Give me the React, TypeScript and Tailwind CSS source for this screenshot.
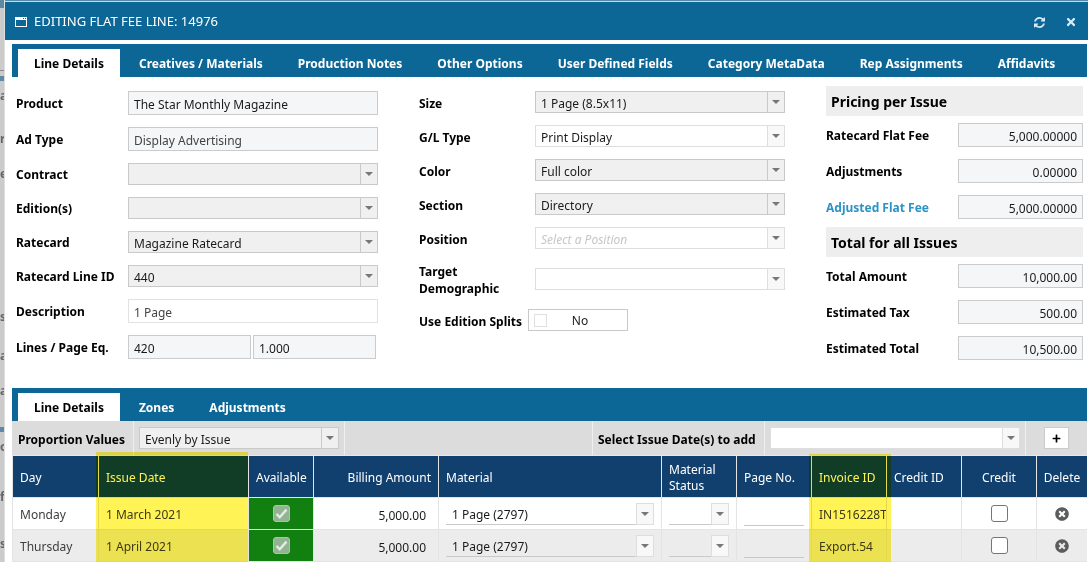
import React from "react";
import clsx from "clsx";
import { FaPlus, FaTimes, FaTimesCircle } from "react-icons/fa";

function WindowIcon() {
  return (
    <svg viewBox="0 0 12 10" className="mt-[2px] h-[10px] w-3" shapeRendering="crispEdges" aria-hidden="true">
      <path fill="currentColor" fillRule="evenodd" d="M0 0h12v10H0zM1 3v6h10V3zM8 1v1h1V1zM10 1v1h1V1z" />
    </svg>
  );
}

function RefreshIcon() {
  return (
    <svg viewBox="0 128 1536 1536" className="h-[11px] w-[11px]" fill="currentColor" aria-hidden="true">
      <path d="M1511 1056q0 5-1 7q-64 268-268 434.5t-478 166.5q-146 0-282.5-55t-243.5-157l-129 129q-19 19-45 19t-45-19t-19-45v-448q0-26 19-45t45-19h448q26 0 45 19t19 45t-19 45l-137 137q71 66 161 102t187 36q134 0 250-65t186-179q11-17 53-117q8-23 30-23h192q13 0 22.5 9.5t9.5 22.5z" />
      <path d="M1536 256v448q0 26-19 45t-45 19h-448q-26 0-45-19t-19-45t19-45l138-138q-148-137-349-137q-134 0-250 65t-186 179q-11 17-53 117q-8 23-30 23h-199q-13 0-22.5-9.5t-9.5-22.5v-7q65-268 270-434.5t480-166.5q146 0 284 55.5t245 156.5l130-129q19-19 45-19t45 19t19 45z" />
    </svg>
  );
}

function Caret() {
  return (
    <svg viewBox="0 0 8 4" className="h-1 w-2" aria-hidden="true">
      <path d="M0 0h8L4 4z" fill="#777777" />
    </svg>
  );
}

type ComboProps = {
  id?: string;
  label?: string;
  value: string;
  look?: "muted" | "plain" | "cell";
  placeholder?: boolean;
  className?: string;
};

function Combo({ id, label, value, look = "muted", placeholder = false, className }: ComboProps) {
  return (
    <div className={clsx("relative h-[22px] min-w-0", className)}>
      <select
        id={id}
        aria-label={label}
        className={clsx(
          "block h-full w-full appearance-none rounded-none pr-5 outline-none",
          look === "muted" && "border border-[#c9c9c9] bg-[#f0f0f0] pl-[5px] pt-[2px]",
          look === "plain" && "border border-[#dedede] bg-white pl-[5px] pt-[2px]",
          look === "cell" && "border-b border-[#c9c9c9] bg-transparent pl-[6px] pt-1",
          placeholder ? "italic text-[#c6c6c6]" : "text-[#1a1a1a]",
        )}
      >
        <option>{value}</option>
      </select>
      <span
        className={clsx(
          "pointer-events-none absolute inset-y-0 right-0 flex w-[18px] items-center justify-center border",
          look === "muted" ? "border-[#c9c9c9] bg-[#f0f0f0]" : "border-[#dedede] bg-[#f8f8f8]",
        )}
      >
        <Caret />
      </span>
    </div>
  );
}

function TextBox({
  id,
  value,
  label,
  tone = "shaded",
  right = false,
}: {
  id?: string;
  value: string;
  label?: string;
  tone?: "shaded" | "soft" | "white";
  right?: boolean;
}) {
  return (
    <input
      id={id}
      aria-label={label}
      type="text"
      defaultValue={value}
      className={clsx(
        "block h-6 w-full min-w-0 rounded-none border px-[5px] pt-[2px] outline-none",
        tone === "white" ? "border-[#e2e2e2] bg-white" : "border-[#c9cbcd] bg-[#f4f6f8]",
        tone === "shaded" ? "text-[#1a1a1a]" : "text-[#444444]",
        right && "text-right",
      )}
    />
  );
}

function Row({
  id,
  label,
  size,
  children,
}: {
  id: string;
  label: string;
  size: "left" | "middle" | "right";
  children: React.ReactNode;
}) {
  return (
    <div className="flex items-center">
      <label
        htmlFor={id}
        className={clsx(
          "shrink-0 font-bold",
          size === "left" && "w-28",
          size === "middle" && "w-[116px] pt-[2px]",
          size === "right" && "w-[132px]",
          label === "Adjusted Flat Fee" ? "text-[#2c93c6]" : "text-black",
        )}
      >
        {label}
      </label>
      <div className="min-w-0 flex-1">{children}</div>
    </div>
  );
}

function TabBar({ tabs, name }: { tabs: string[]; name: string }) {
  return (
    <div role="tablist" aria-label={name} className="flex h-[33px] items-end gap-[3px] bg-[#0c6796] pl-[6px]">
      {tabs.map((tab, i) => (
        <button
          key={tab}
          type="button"
          role="tab"
          aria-selected={i === 0}
          className={clsx(
            "h-7 whitespace-nowrap px-4 font-bold",
            i === 0 ? "bg-white text-black" : "text-white",
          )}
        >
          {tab}
        </button>
      ))}
    </div>
  );
}

function SectionTitle({ children }: { children: React.ReactNode }) {
  return (
    <h2 className="flex h-[30px] items-center bg-[#eeeeee] pl-[5px] pt-px text-sm font-bold text-black">{children}</h2>
  );
}

const issues = [
  { day: "Monday", date: "1 March 2021", amount: "5,000.00", material: "1 Page (2797)", invoice: "IN1516228T" },
  { day: "Thursday", date: "1 April 2021", amount: "5,000.00", material: "1 Page (2797)", invoice: "Export.54" },
];

const prices = [
  { id: "flat-fee", label: "Ratecard Flat Fee", value: "5,000.00000" },
  { id: "adjustments", label: "Adjustments", value: "0.00000" },
  { id: "adjusted-fee", label: "Adjusted Flat Fee", value: "5,000.00000" },
];

const totals = [
  { id: "total-amount", label: "Total Amount", value: "10,000.00" },
  { id: "est-tax", label: "Estimated Tax", value: "500.00" },
  { id: "est-total", label: "Estimated Total", value: "10,500.00" },
];

function Highlight({ className }: { className: string }) {
  return (
    <span className={clsx("pointer-events-none absolute h-[110px] bg-[#fff356] mix-blend-multiply", className)} />
  );
}

function IssueTable() {
  const head = "border-r border-[#e4e4e4] px-[7px] pt-[3px] align-middle font-normal";
  const cell = "border-r border-t border-[#e4e4e4] px-[7px]";
  return (
    <table className="w-full table-fixed border-separate border-spacing-0 leading-4">
      <colgroup>
        <col className="w-[87px]" />
        <col className="w-[150px]" />
        <col className="w-[65px]" />
        <col className="w-[125px]" />
        <col />
        <col className="w-[75px]" />
        <col className="w-[75px]" />
        <col className="w-[75px]" />
        <col className="w-[75px]" />
        <col className="w-[75px]" />
        <col className="w-[50px]" />
      </colgroup>
      <thead>
        <tr className="h-[41px] bg-[#11406f] text-white">
          <th className={clsx(head, "border-l text-left")}>Day</th>
          <th className={clsx(head, "relative text-left")}>
            Issue Date
            <Highlight className="-left-[3px] -top-1 right-0" />
          </th>
          <th className={clsx(head, "text-center")}>Available</th>
          <th className={clsx(head, "whitespace-nowrap text-right")}>Billing Amount</th>
          <th className={clsx(head, "text-left")}>Material</th>
          <th className={clsx(head, "text-left")}>Material Status</th>
          <th className={clsx(head, "whitespace-nowrap text-left")}>Page No.</th>
          <th className={clsx(head, "relative whitespace-nowrap text-left")}>
            Invoice ID
            <Highlight className="-left-[3px] -right-[5px] -top-[2px]" />
          </th>
          <th className={clsx(head, "whitespace-nowrap text-left")}>Credit ID</th>
          <th className={clsx(head, "text-center")}>Credit</th>
          <th className="pt-[3px] text-center font-normal">Delete</th>
        </tr>
      </thead>
      <tbody>
        {issues.map((row, i) => (
          <tr key={row.day} className={clsx("h-8 text-[#3c3c3c]", i % 2 === 1 ? "bg-[#ececec]" : "bg-white")}>
            <td className={clsx(cell, "border-l pt-[2px]")}>{row.day}</td>
            <td className={clsx(cell, "pt-[2px]")}>{row.date}</td>
            <td className={clsx(cell, "bg-[#118011]")}>
              <span className="relative mx-auto block h-[17px] w-[17px]">
                <input
                  type="checkbox"
                  checked
                  disabled
                  readOnly
                  aria-label={`${row.day} available`}
                  className="block h-full w-full appearance-none rounded-[3px] border border-[#a9c6a9] bg-[#93b493]"
                />
                <svg viewBox="0 0 17 17" className="absolute inset-0" aria-hidden="true">
                  <path d="M3.5 9l3.2 3.2L13.5 4.6" fill="none" stroke="#e3ece3" strokeWidth="2.4" />
                </svg>
              </span>
            </td>
            <td className={cell}>
              <input
                type="text"
                aria-label={`${row.day} billing amount`}
                defaultValue={row.amount}
                className="block h-[22px] w-full bg-transparent pr-[5px] pt-[3px] text-right text-[#1a1a1a] outline-none"
              />
            </td>
            <td className={cell}>
              <Combo look="cell" label={`${row.day} material`} value={row.material} />
            </td>
            <td className={cell}>
              <Combo look="cell" label={`${row.day} material status`} value="" />
            </td>
            <td className={cell}>
              <input
                type="text"
                aria-label={`${row.day} page number`}
                className="block h-6 w-full border-b border-[#c9c9c9] bg-transparent outline-none"
              />
            </td>
            <td className={clsx(cell, "overflow-hidden whitespace-nowrap pr-0 pt-[2px]")}>{row.invoice}</td>
            <td className={cell} />
            <td className={cell}>
              <input
                type="checkbox"
                aria-label={`${row.day} credit`}
                className="mx-auto block h-[17px] w-[17px] appearance-none rounded-[3px] border border-[#767676] bg-white"
              />
            </td>
            <td className="border-t border-[#e4e4e4]">
              <button
                type="button"
                aria-label={`Delete ${row.day}`}
                className="mx-auto flex h-5 items-center text-sm text-[#5c5c5c]"
              >
                <FaTimesCircle />
              </button>
            </td>
          </tr>
        ))}
      </tbody>
    </table>
  );
}

function Backdrop() {
  return (
    <div aria-hidden="true" className="flex w-1 shrink-0 flex-col overflow-hidden bg-[#cbcbcb] font-bold text-[#666666]">
      <div className="h-2 shrink-0 bg-[#5b8aa6]" />
      <div className="mt-[62px] h-px shrink-0 bg-[#8a8a8a]" />
      <div className="mt-[5px] h-[5px] shrink-0 bg-[#5b8aa6]" />
      <div className="mt-[6px]">a</div>
      <div className="mt-[26px]">r</div>
      <div className="mt-[18px]">e</div>
      <div className="mt-[126px]">s</div>
      <div className="mt-[22px]">a</div>
      <div className="mt-[18px]">a</div>
      <div className="mt-[28px] h-[5px] shrink-0 bg-[#5b8aa6]" />
      <div className="mt-[6px]">o</div>
      <div className="mt-[33px]">f</div>
      <div className="mt-[30px]">s</div>
    </div>
  );
}

export default function App() {
  return (
    <div className="flex overflow-hidden bg-white font-['Noto_Sans','Open_Sans',sans-serif] text-xs leading-[17px] text-[#1a1a1a]">
      <Backdrop />
      <main className="min-w-0 flex-1 border-l border-[#dedede] bg-white">
        <div className="h-[2px] border-b border-[#cdd9e2] bg-[#5b8aa6]" />
        <header className="flex h-[38px] items-center bg-[#0c6796] pl-[10px] pr-3 text-white">
          <WindowIcon />
          <h1 className="ml-[7px] flex-1 text-[13px]">EDITING FLAT FEE LINE: 14976</h1>
          <div className="flex items-center gap-[21px] pt-[2px] text-[#d5ebf7]">
            <button type="button" aria-label="Refresh">
              <RefreshIcon />
            </button>
            <button type="button" aria-label="Close" className="text-xs">
              <FaTimes className="w-[10px]" />
            </button>
          </div>
        </header>

        <div className="pl-[7px] pr-px pt-1">
          <TabBar
            name="Line sections"
            tabs={[
              "Line Details",
              "Creatives / Materials",
              "Production Notes",
              "Other Options",
              "User Defined Fields",
              "Category MetaData",
              "Rep Assignments",
              "Affidavits",
            ]}
          />

          <form className="grid grid-cols-[362fr_366fr_257fr] gap-[41px] pb-7 pl-1 pr-1 pt-[9px]">
            <div className="flex flex-col gap-3 pt-[5px]">
              <Row id="product" label="Product" size="left">
                <TextBox id="product" value="The Star Monthly Magazine" />
              </Row>
              <Row id="ad-type" label="Ad Type" size="left">
                <TextBox id="ad-type" value="Display Advertising" tone="soft" />
              </Row>
              <Row id="contract" label="Contract" size="left">
                <Combo id="contract" value="" />
              </Row>
              <Row id="editions" label="Edition(s)" size="left">
                <Combo id="editions" value="" />
              </Row>
              <Row id="ratecard" label="Ratecard" size="left">
                <Combo id="ratecard" value="Magazine Ratecard" />
              </Row>
              <Row id="ratecard-line" label="Ratecard Line ID" size="left">
                <Combo id="ratecard-line" value="440" />
              </Row>
              <Row id="description" label="Description" size="left">
                <TextBox id="description" value="1 Page" tone="white" />
              </Row>
              <Row id="lines" label="Lines / Page Eq." size="left">
                <div className="flex gap-[2px] pr-[2px]">
                  <TextBox id="lines" value="420" />
                  <TextBox label="Page equivalent" value="1.000" />
                </div>
              </Row>
            </div>

            <div className="flex flex-col gap-3 pt-[5px]">
              <Row id="size" label="Size" size="middle">
                <Combo id="size" value="1 Page (8.5x11)" />
              </Row>
              <Row id="gl-type" label="G/L Type" size="middle">
                <Combo id="gl-type" value="Print Display" look="plain" />
              </Row>
              <Row id="color" label="Color" size="middle">
                <Combo id="color" value="Full color" />
              </Row>
              <Row id="section" label="Section" size="middle">
                <Combo id="section" value="Directory" />
              </Row>
              <Row id="position" label="Position" size="middle">
                <Combo id="position" value="Select a Position" look="plain" placeholder />
              </Row>
              <Row id="demographic" label="Target Demographic" size="middle">
                <Combo id="demographic" value="" look="plain" />
              </Row>
              <label className="flex items-center whitespace-nowrap">
                <span className="w-[109px] pt-[2px] font-bold text-black">Use Edition Splits</span>
                <span className="flex h-[22px] w-[100px] items-center border border-[#c9c9c9] pl-[5px]">
                  <input type="checkbox" className="h-[13px] w-[13px] appearance-none border border-[#e0e0e0]" />
                  <span className="flex-1 pr-[14px] text-center">No</span>
                </span>
              </label>
            </div>

            <div className="flex flex-col gap-2">
              <SectionTitle>Pricing per Issue</SectionTitle>
              <div className="-mt-px flex flex-col gap-3">
                {prices.map((p) => (
                  <Row key={p.id} id={p.id} label={p.label} size="right">
                    <TextBox id={p.id} value={p.value} right />
                  </Row>
                ))}
              </div>
              <SectionTitle>Total for all Issues</SectionTitle>
              <div className="-mt-px flex flex-col gap-3">
                {totals.map((p) => (
                  <Row key={p.id} id={p.id} label={p.label} size="right">
                    <TextBox id={p.id} value={p.value} right />
                  </Row>
                ))}
              </div>
            </div>
          </form>

          <TabBar name="Issue sections" tabs={["Line Details", "Zones", "Adjustments"]} />

          <div className="flex h-[35px] items-stretch border-b border-[#e8e8e8] bg-[#dcdcdc] text-black">
            <label htmlFor="proportion" className="flex w-[121px] items-center whitespace-nowrap pl-[6px] pt-[2px] font-bold">
              Proportion Values
            </label>
            <div className="flex w-[212px] items-center border-x border-[#efefef] px-[5px]">
              <Combo id="proportion" value="Evenly by Issue" className="w-full" />
            </div>
            <div className="flex-1" />
            <label
              htmlFor="issue-date"
              className="flex w-[172px] items-center whitespace-nowrap border-l border-[#efefef] pl-[5px] pt-[2px] font-bold"
            >
              Select Issue Date(s) to add
            </label>
            <div className="flex w-[262px] items-center border-x border-[#efefef] px-[5px]">
              <Combo id="issue-date" value="" look="plain" className="w-full" />
            </div>
            <div className="flex w-[61px] items-center justify-center">
              <button
                type="button"
                aria-label="Add issue date"
                className="flex h-[22px] w-[25px] items-center justify-center border border-[#cccccc] bg-white text-[9px]"
              >
                <FaPlus />
              </button>
            </div>
          </div>

          <IssueTable />
          <div className="h-px bg-[#e4e4e4]" />
        </div>
      </main>
    </div>
  );
}
